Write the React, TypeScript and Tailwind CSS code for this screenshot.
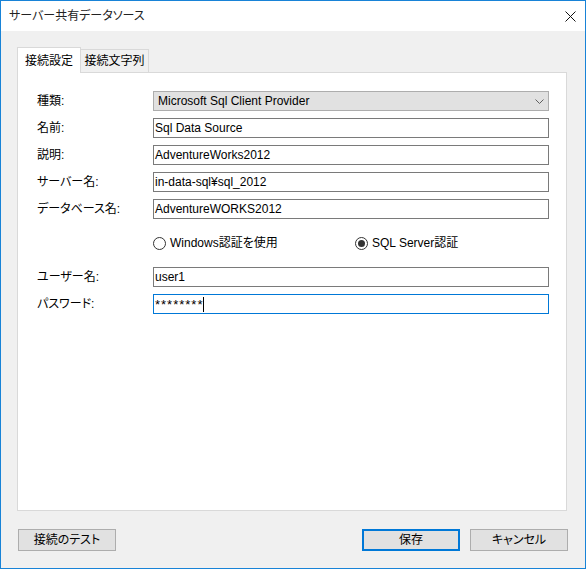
import React from 'react'

const font = "[font-family:'Liberation_Sans','Noto_Sans_CJK_JP',sans-serif] [font-feature-settings:'palt']"

// ─── Form rows ───────────────────────────────────────────

function Field({ label, value, focused }: { label: string; value: string; focused?: boolean }) {
  return (
    <div className="flex items-center h-[20px]">
      <div className="w-[116px] text-[12px] text-black leading-none">{label}</div>
      <div
        className={
          'flex-1 h-[20px] flex items-center pl-[1px] text-[12px] text-black bg-white border ' +
          (focused ? 'border-[#0078d7]' : 'border-[#7a7a7a]')
        }
      >
        <span className={'leading-none ' + (focused ? 'tracking-[1px] text-[13px]' : '')}>{value}</span>
        {focused && <span className="w-px h-[15px] bg-black" />}
      </div>
    </div>
  )
}

function Radio({ label, checked }: { label: string; checked?: boolean }) {
  return (
    <div className="flex items-center gap-[4px]">
      <span className="w-[13px] h-[13px] rounded-full border border-[#333333] bg-white flex items-center justify-center">
        {checked && <span className="w-[7px] h-[7px] rounded-full bg-[#333333]" />}
      </span>
      <span className="text-[12px] text-black leading-none">{label}</span>
    </div>
  )
}

export default function App() {
  return (
    <div className={'w-[586px] h-[569px] border border-[#1883d7] bg-[#f0f0f0] flex flex-col ' + font}>
      {/* title bar */}
      <div className="h-[30px] bg-white flex items-center justify-between pl-[8px] pr-[9px]">
        <span className="text-[12px] text-[#222222] leading-none">サーバー共有データソース</span>
        <svg width="11" height="11" viewBox="0 0 11 11">
          <path d="M0.5 0.5 L10.5 10.5 M10.5 0.5 L0.5 10.5" stroke="#111111" strokeWidth="1" />
        </svg>
      </div>

      <div className="flex-1 flex flex-col pl-[16px] pr-[17px] pt-[16px] pb-[17px]">
        {/* tabs */}
        <div className="flex items-end h-[26px] -mb-px relative z-10">
          <div className="w-[64px] h-[26px] bg-white border border-b-0 border-[#d9d9d9] flex items-center justify-center text-[12px] text-black">
            接続設定
          </div>
          <div className="w-[68px] h-[23px] mb-px bg-[#f0f0f0] border border-l-0 border-b-0 border-[#d9d9d9] flex items-center justify-center text-[12px] text-black">
            接続文字列
          </div>
        </div>

        {/* panel */}
        <div className="h-[439px] mr-[1px] bg-white border border-[#d9d9d9] pl-[19px] pr-[17px] pt-[18px]">
          <div className="flex flex-col gap-[7px]">
            <div className="flex items-center h-[20px]">
              <div className="w-[116px] text-[12px] text-black leading-none">種類:</div>
              <div className="flex-1 h-[20px] flex items-center justify-between pl-[4px] pr-[4px] bg-[#e1e1e1] border border-[#adadad] text-[12px] text-black">
                <span className="leading-none">Microsoft Sql Client Provider</span>
                <svg width="9" height="5" viewBox="0 0 9 5">
                  <path d="M0.5 0.5 L4.5 4.5 L8.5 0.5" fill="none" stroke="#606060" strokeWidth="1" />
                </svg>
              </div>
            </div>
            <Field label="名前:" value="Sql Data Source" />
            <Field label="説明:" value="AdventureWorks2012" />
            <Field label="サーバー名:" value="in-data-sql¥sql_2012" />
            <Field label="データベース名:" value="AdventureWORKS2012" />
          </div>

          <div className="flex items-center h-[20px] mt-[14px] pl-[116px]">
            <div className="w-[202px]">
              <Radio label="Windows認証を使用" />
            </div>
            <Radio label="SQL Server認証" checked />
          </div>

          <div className="flex flex-col gap-[7px] mt-[14px]">
            <Field label="ユーザー名:" value="user1" />
            <Field label="パスワード:" value="********" focused />
          </div>
        </div>

        {/* buttons */}
        <div className="flex items-center mt-[18px] pl-[1px]">
          <button className="w-[98px] h-[22px] bg-[#e1e1e1] border border-[#adadad] text-[12px] text-black">
            接続のテスト
          </button>
          <div className="flex-1" />
          <button className="w-[98px] h-[22px] bg-[#e1e1e1] border-2 border-[#0078d7] text-[12px] text-black">
            保存
          </button>
          <button className="w-[98px] h-[22px] ml-[10px] bg-[#e1e1e1] border border-[#adadad] text-[12px] text-black">
            キャンセル
          </button>
        </div>
      </div>
    </div>
  )
}
